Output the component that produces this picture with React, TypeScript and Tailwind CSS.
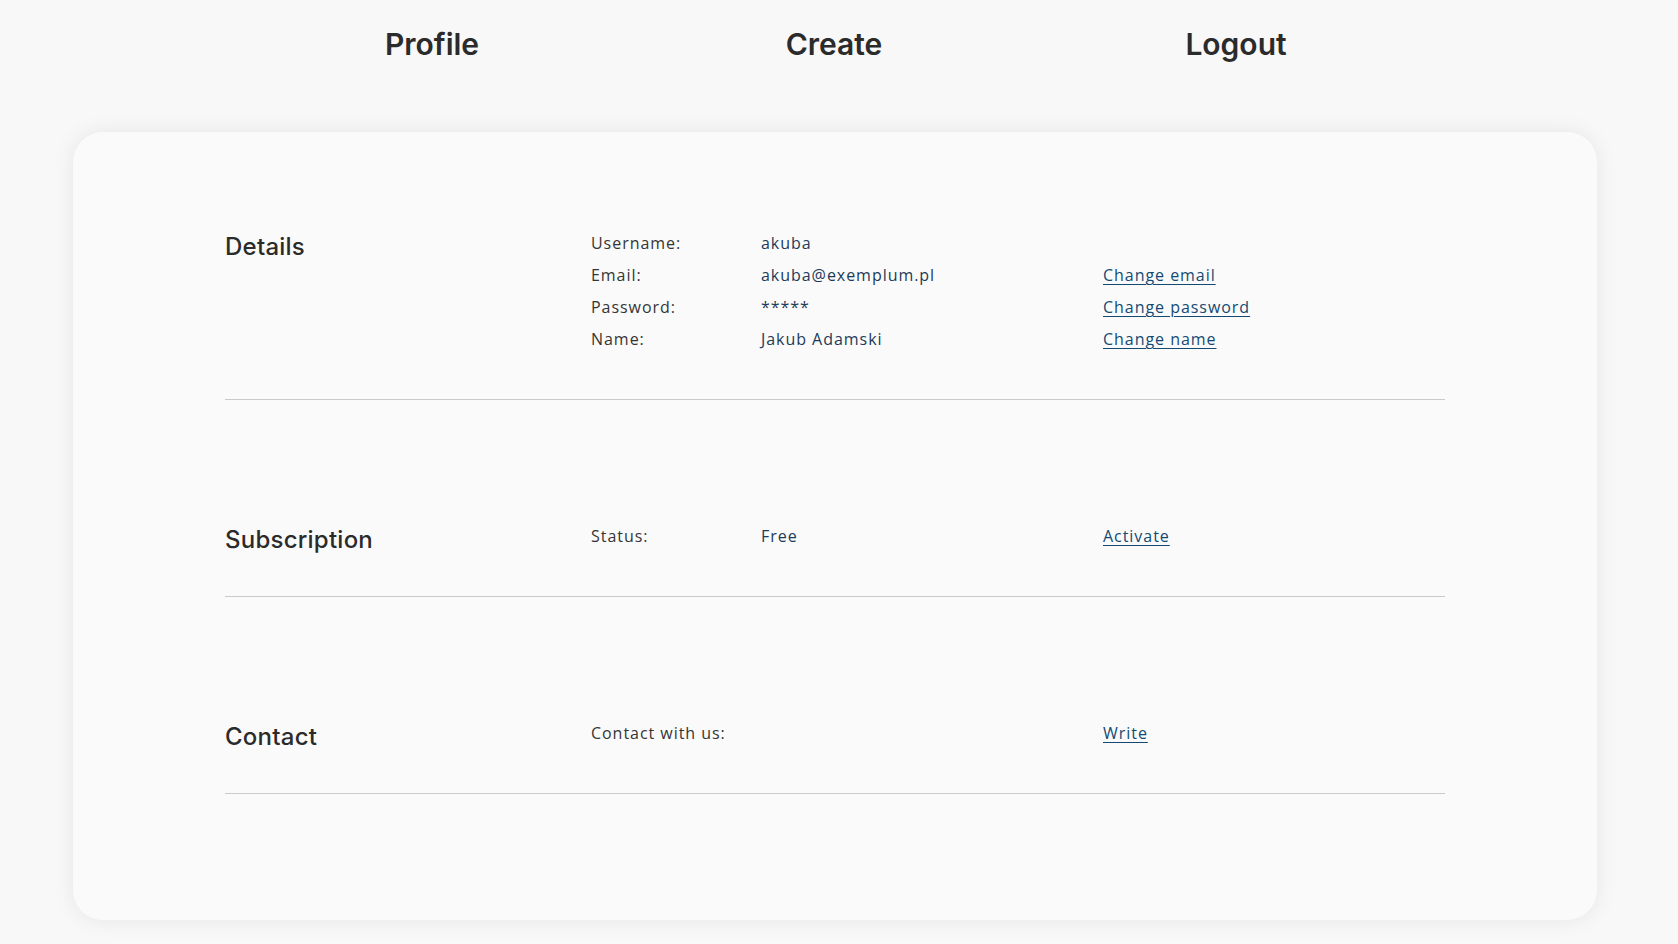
const heading = "font-['Inter','Lato',sans-serif] text-[#2b2b2b]";
const body = "font-['Open_Sans','Noto_Sans',sans-serif] text-[16px] leading-[32px] tracking-[0.06em]";

type Row = { label: string; value?: string; link?: string };

const sections: { title: string; rows: Row[] }[] = [
  {
    title: "Details",
    rows: [
      { label: "Username:", value: "akuba" },
      { label: "Email:", value: "akuba@exemplum.pl", link: "Change email" },
      { label: "Password:", value: "*****", link: "Change password" },
      { label: "Name:", value: "Jakub Adamski", link: "Change name" },
    ],
  },
  { title: "Subscription", rows: [{ label: "Status:", value: "Free", link: "Activate" }] },
  { title: "Contact", rows: [{ label: "Contact with us:", link: "Write" }] },
];

function Section({ title, rows, first }: { title: string; rows: Row[]; first?: boolean }) {
  return (
    <section className={`flex border-b border-[#cacaca] pb-[44px] ${first ? "" : "pt-[120px]"}`}>
      <h2 className={`${heading} w-[366px] shrink-0 pt-[8px] text-[24px] font-medium leading-[24px] tracking-[0.01em]`}>
        {title}
      </h2>
      <div className={`${body} flex-1`}>
        {rows.map((r) => (
          <div key={r.label} className="flex">
            <span className="w-[170px] shrink-0 text-[#353535]">{r.label}</span>
            <span className="w-[342px] shrink-0 text-[#1c3b58]">{r.value}</span>
            {r.link && (
              <a href="#" className="text-[#124a74] underline underline-offset-[3px]">
                {r.link}
              </a>
            )}
          </div>
        ))}
      </div>
    </section>
  );
}

export default function App() {
  return (
    <div className="min-h-screen bg-[#f8f8f8] pb-[24px]">
      <nav className={`${heading} flex h-[88px] items-center justify-center pr-[10px] text-[30px] font-semibold`}>
        <a href="#" className="w-[402px] text-center">Profile</a>
        <a href="#" className="w-[402px] text-center">Create</a>
        <a href="#" className="w-[402px] text-center">Logout</a>
      </nav>
      <main className="ml-[73px] mt-[44px] w-[1524px] rounded-[30px] bg-[#fafafa] px-[152px] pb-[126px] pt-[95px] shadow-[0_0_22px_rgba(0,0,0,0.08)]">
        {sections.map((s, i) => (
          <Section key={s.title} title={s.title} rows={s.rows} first={i === 0} />
        ))}
      </main>
    </div>
  );
}
